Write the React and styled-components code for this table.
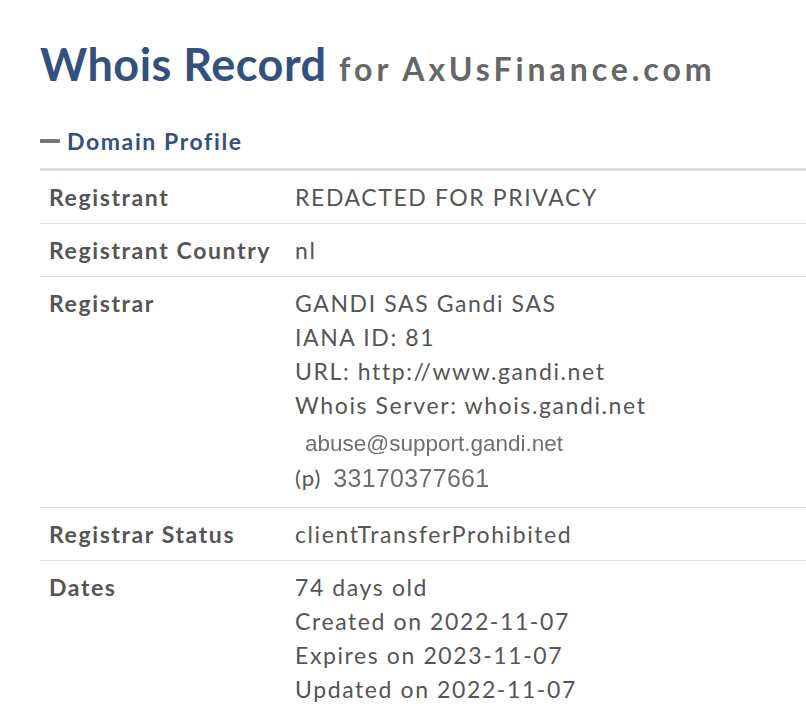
import React from "react";
import styled, { createGlobalStyle } from "styled-components";

const Global = createGlobalStyle`
  html, body {
    margin: 0;
    padding: 0;
    background: #fff;
  }
  body {
    font-family: Lato, "Open Sans", "Liberation Sans", sans-serif;
    overflow: hidden;
  }
`;

const rows = [
  { label: "Registrant", lines: ["REDACTED FOR PRIVACY"] },
  { label: "Registrant Country", lines: ["nl"] },
  {
    label: "Registrar",
    lines: [
      "GANDI SAS Gandi SAS",
      "IANA ID: 81",
      "URL: http://www.gandi.net",
      "Whois Server: whois.gandi.net",
    ],
    contact: { email: "abuse@support.gandi.net", phone: "33170377661" },
  },
  { label: "Registrar Status", lines: ["clientTransferProhibited"] },
  {
    label: "Dates",
    lines: [
      "74 days old",
      "Created on 2022-11-07",
      "Expires on 2023-11-07",
      "Updated on 2022-11-07",
    ],
  },
];

export default function App() {
  return (
    <Page>
      <Global />
      <Title>
        Whois Record <small>for AxUsFinance.com</small>
      </Title>
      <SectionHead>
        <Minus />
        Domain Profile
      </SectionHead>
      <Table>
        {rows.map((r) => (
          <Row key={r.label}>
            <Label>{r.label}</Label>
            <Value>
              {r.lines.map((l) => (
                <Line key={l}>{l}</Line>
              ))}
              {r.contact && (
                <>
                  <Email>{r.contact.email}</Email>
                  <Phone>
                    <span>(p)</span>
                    <Blurred>{r.contact.phone}</Blurred>
                  </Phone>
                </>
              )}
            </Value>
          </Row>
        ))}
      </Table>
    </Page>
  );
}

const Page = styled.div`
  padding: 0 0 0 40px;
  width: 766px;
`;

const Title = styled.h1`
  margin: 0;
  padding-top: 38px;
  font-size: 45px;
  line-height: 52px;
  font-weight: 700;
  color: #34507e;
  letter-spacing: 0.5px;
  small {
    font-size: 32px;
    color: #666;
    margin-left: 1px;
    letter-spacing: 3.95px;
  }
`;

const SectionHead = styled.div`
  display: flex;
  align-items: center;
  margin-top: 30px;
  height: 32px;
  font-size: 23px;
  font-weight: 700;
  color: #34507e;
  letter-spacing: 1.6px;
  padding-bottom: 11px;
  border-bottom: 3px solid #dddddd;
`;

const Minus = styled.span`
  display: inline-block;
  width: 20px;
  height: 4px;
  border-radius: 1px;
  background: #777;
  margin-right: 7px;
`;

const Table = styled.div`
  display: flex;
  flex-direction: column;
`;

const Row = styled.div`
  display: grid;
  grid-template-columns: 246px 1fr;
  padding: 9px 0 9px 9px;
  border-bottom: 1px solid #dddddd;
  font-size: 23px;
  line-height: 34px;
  color: #555;
  letter-spacing: 1.6px;
`;

const Label = styled.div`
  font-weight: 700;
  white-space: nowrap;
`;

const Value = styled.div`
  display: flex;
  flex-direction: column;
`;

const Line = styled.div`
  white-space: nowrap;
`;

const Email = styled.div`
  height: 43px;
  padding-left: 10px;
  display: flex;
  align-items: center;
  font-family: "Liberation Sans", Arial, sans-serif;
  font-size: 22.5px;
  color: #6f6f6f;
  letter-spacing: 0;
  filter: blur(0.35px);
`;

const Phone = styled.div`
  height: 26px;
  margin-bottom: 7px;
  display: flex;
  align-items: center;
  gap: 12px;
  span {
    font-size: 22px;
    letter-spacing: 1px;
  }
`;

const Blurred = styled.span`
  font-family: "Liberation Sans", Arial, sans-serif;
  font-size: 25px !important;
  color: #6f6f6f;
  letter-spacing: 0.3px !important;
  filter: blur(0.35px);
`;
